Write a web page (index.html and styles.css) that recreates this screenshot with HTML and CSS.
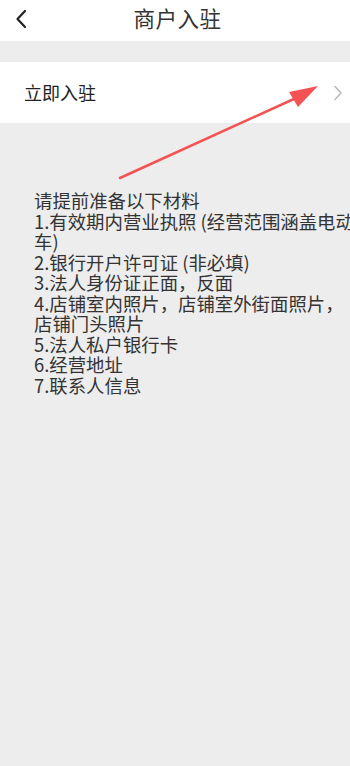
FILE: index.html
```html
<!DOCTYPE html>
<html lang="zh">
<head>
<meta charset="utf-8">
<link rel="stylesheet" href="styles.css">
</head>
<body>
<div class="page">
  <header class="nav">
    <svg class="back" width="12" height="20" viewBox="0 0 12 20"><path d="M10 2 L2.5 10 L10 18" fill="none" stroke="#222" stroke-width="2.2" stroke-linecap="round" stroke-linejoin="round"/></svg>
    <h1 class="title">商户入驻</h1>
  </header>
  <div class="spacer"></div>
  <div class="row">
    <span class="row-label">立即入驻</span>
    <svg class="chev" width="10" height="16" viewBox="0 0 10 16"><path d="M2 1.5 L8 8 L2 14.5" fill="none" stroke="#bbb" stroke-width="1.6" stroke-linecap="round" stroke-linejoin="round"/></svg>
  </div>
  <div class="materials">
    <p>请提前准备以下材料</p>
    <p>1.有效期内营业执照 (经营范围涵盖电动车)</p>
    <p>2.银行开户许可证 (非必填)</p>
    <p>3.法人身份证正面，反面</p>
    <p>4.店铺室内照片，店铺室外街面照片，店铺门头照片</p>
    <p>5.法人私户银行卡</p>
    <p>6.经营地址</p>
    <p>7.联系人信息</p>
  </div>
  <svg class="arrow" width="350" height="200" viewBox="0 0 350 200">
    <line x1="120" y1="178" x2="296" y2="98" stroke="#f55353" stroke-width="2.6" stroke-linecap="round"/>
    <polygon points="318,86 289,92 298,107" fill="#f55353"/>
  </svg>
</div>
</body>
</html>
```
FILE: styles.css
```css
html, body {
  margin: 0;
  padding: 0;
}
body {
  background: #ededed;
  font-family: "Noto Sans CJK SC", "Noto Sans", sans-serif;
  color: #333;
  width: 350px;
  height: 766px;
  overflow: hidden;
}
.page {
  position: relative;
  width: 350px;
  height: 766px;
}
.nav {
  box-sizing: border-box;
  height: 41px;
  padding-bottom: 5px;
  background: #fff;
  display: flex;
  align-items: center;
  justify-content: center;
  position: relative;
}
.back {
  position: absolute;
  left: 15px;
  top: 9px;
}
.title {
  margin: 0 0 0 5px;
  font-size: 21.5px;
  font-weight: 400;
  color: #333;
  line-height: 30px;
  letter-spacing: 0.5px;
}
.spacer {
  height: 21px;
}
.row {
  box-sizing: border-box;
  height: 61px;
  background: #fff;
  display: flex;
  align-items: center;
  justify-content: space-between;
  padding: 0 7px 2px 24px;
}
.row-label {
  font-size: 18px;
  color: #222;
}
.chev {
  margin-top: 2px;
}
.materials {
  margin: 67px 0 0 34px;
  width: 322px;
  font-size: 18.4px;
  line-height: 20.5px;
  color: #333;
}
.materials p {
  margin: 0;
}
.arrow {
  position: absolute;
  left: 0;
  top: 0;
  pointer-events: none;
}
```
